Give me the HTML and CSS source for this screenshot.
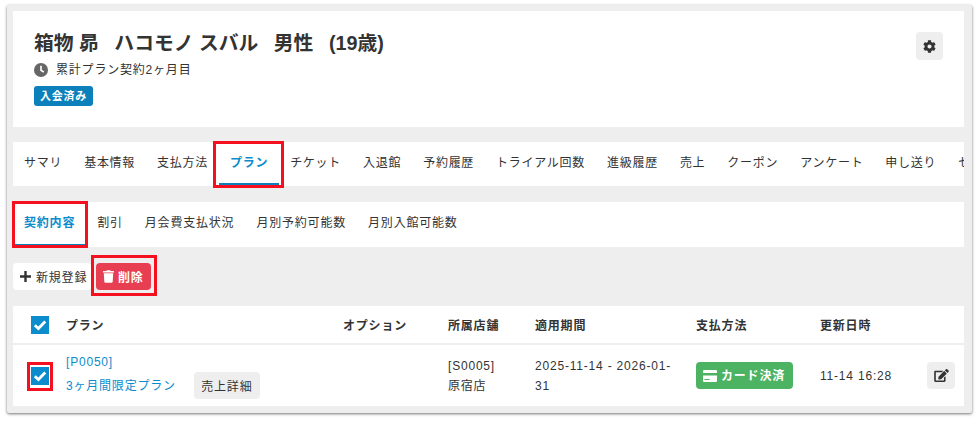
FILE: index.html
```html
<!DOCTYPE html>
<html lang="ja">
<head>
    <meta charset="UTF-8">
    <meta name="viewport" content="width=device-width, initial-scale=1.0">
    <title>プラン</title>
    <link rel="stylesheet" href="styles.css">
</head>
<body>
    <div class="frame">
        <section class="profile">
            <div class="profile-info">
                <h1 class="member-name"><span>箱物 昴</span><span>ハコモノ スバル</span><span>男性</span><span>(19歳)</span></h1>
                <p class="contract-months">
                    <svg class="clock-icon" viewBox="0 0 16 16"><circle cx="8" cy="8" r="8" fill="#666"/><path d="M8 3.2V8.300L11.200 10.400" fill="none" stroke="#fff" stroke-width="1.900"/></svg>
                    累計プラン契約2ヶ月目
                </p>
                <span class="status-badge">入会済み</span>
            </div>
            <button class="icon-btn settings-btn">
                <svg class="gear-icon" viewBox="0 0 512 512"><path fill="#333" d="M487.4 315.7l-42.6-24.6c4.3-23.2 4.3-47 0-70.2l42.6-24.6c4.9-2.8 7.1-8.6 5.5-14-11.1-35.6-30-67.8-54.7-94.6-3.8-4.1-10-5.1-14.8-2.3L380.8 110c-17.9-15.4-38.5-27.3-60.8-35.1V25.8c0-5.6-3.9-10.5-9.4-11.7-36.7-8.2-74.3-7.8-109.2 0-5.5 1.2-9.4 6.1-9.4 11.7V75c-22.2 7.9-42.8 19.8-60.8 35.1L88.7 85.5c-4.9-2.8-11-1.900-14.800 2.300-24.700 26.700-43.600 58.900-54.700 94.600-1.700 5.400.6 11.200 5.500 14L67.300 221c-4.300 23.200-4.300 47 0 70.200l-42.600 24.600c-4.900 2.800-7.100 8.600-5.500 14 11.100 35.600 30 67.800 54.700 94.600 3.800 4.100 10 5.100 14.800 2.300l42.600-24.600c17.900 15.400 38.500 27.300 60.800 35.100v49.200c0 5.600 3.900 10.500 9.400 11.700 36.700 8.200 74.300 7.800 109.200 0 5.500-1.200 9.400-6.100 9.400-11.700v-49.200c22.200-7.900 42.800-19.800 60.800-35.100l42.600 24.600c4.900 2.800 11 1.900 14.800-2.300 24.700-26.700 43.600-58.900 54.700-94.600 1.500-5.500-.7-11.300-5.600-14.100zM256 336c-44.100 0-80-35.900-80-80s35.900-80 80-80 80 35.900 80 80-35.900 80-80 80z"/></svg>
            </button>
        </section>

        <nav class="tabs main-tabs">
            <a class="tab">サマリ</a>
            <a class="tab">基本情報</a>
            <a class="tab">支払方法</a>
            <a class="tab active marked">プラン</a>
            <a class="tab">チケット</a>
            <a class="tab">入退館</a>
            <a class="tab">予約履歴</a>
            <a class="tab">トライアル回数</a>
            <a class="tab">進級履歴</a>
            <a class="tab">売上</a>
            <a class="tab">クーポン</a>
            <a class="tab">アンケート</a>
            <a class="tab">申し送り</a>
            <a class="tab tab-cut">セキュリティ</a>
        </nav>

        <nav class="tabs sub-tabs">
            <a class="tab active marked">契約内容</a>
            <a class="tab">割引</a>
            <a class="tab">月会費支払状況</a>
            <a class="tab">月別予約可能数</a>
            <a class="tab">月別入館可能数</a>
        </nav>

        <div class="actions">
            <button class="btn btn-new">
                <svg class="plus-icon" viewBox="0 0 11 11"><path fill="#333" d="M4.300 0h2.400v4.300H11v2.400H6.700V11H4.300V6.700H0V4.300h4.300z"/></svg>
                新規登録
            </button>
            <button class="btn btn-delete">
                <svg class="trash-icon" viewBox="0 0 448 512"><path fill="#fff" d="M432 32H312l-9.400-18.700A24 24 0 0 0 281.100 0H166.800a23.720 23.720 0 0 0-21.400 13.300L136 32H16A16 16 0 0 0 0 48v32a16 16 0 0 0 16 16h416a16 16 0 0 0 16-16V48a16 16 0 0 0-16-16zM53.200 467a48 48 0 0 0 47.900 45h245.800a48 48 0 0 0 47.900-45L416 128H32z"/></svg>
                削除
            </button>
        </div>

        <table class="plans">
            <thead>
                <tr>
                    <th class="col-check"><span class="checkbox"><svg viewBox="0 0 18 18"><path d="M3.800 9.300l3.600 3.300 6.800-7" fill="none" stroke="#fff" stroke-width="2.800"/></svg></span></th>
                    <th class="col-plan">プラン</th>
                    <th class="col-option">オプション</th>
                    <th class="col-shop">所属店舗</th>
                    <th class="col-period">適用期間</th>
                    <th class="col-pay">支払方法</th>
                    <th class="col-updated">更新日時</th>
                    <th class="col-edit"></th>
                </tr>
            </thead>
            <tbody>
                <tr>
                    <td class="col-check"><span class="checkbox marked-check"><svg viewBox="0 0 18 18"><path d="M3.800 9.300l3.600 3.300 6.800-7" fill="none" stroke="#fff" stroke-width="2.800"/></svg></span></td>
                    <td class="col-plan">
                        <a class="plan-code">[P0050]</a>
                        <div class="plan-line">
                            <a class="plan-name">3ヶ月間限定プラン</a>
                            <button class="btn btn-sales">売上詳細</button>
                        </div>
                    </td>
                    <td class="col-option"></td>
                    <td class="col-shop">[S0005]<br>原宿店</td>
                    <td class="col-period">2025-11-14 - 2026-01-31</td>
                    <td class="col-pay">
                        <span class="pay-badge">
                            <svg class="card-icon" viewBox="0 0 14 12"><path fill="#fff" d="M1 0h12a1 1 0 0 1 1 1v2H0V1a1 1 0 0 1 1-1zM0 5.500h14V11a1 1 0 0 1-1 1H1a1 1 0 0 1-1-1zm1.500 3.500v1h5V9z"/></svg>
                            カード決済
                        </span>
                    </td>
                    <td class="col-updated">11-14 16:28</td>
                    <td class="col-edit">
                        <button class="icon-btn edit-btn">
                            <svg class="edit-icon" viewBox="0 0 576 512"><path fill="#333" d="M402.600 83.200l90.200 90.200c3.800 3.800 3.800 10 0 13.800L274.400 405.600l-92.800 10.300c-12.400 1.400-22.900-9.100-21.500-21.500l10.300-92.800L388.800 83.200c3.800-3.800 10-3.800 13.800 0zm162-22.900l-48.800-48.800c-15.200-15.200-39.900-15.200-55.200 0l-35.400 35.400c-3.800 3.800-3.800 10 0 13.800l90.200 90.200c3.800 3.800 10 3.800 13.800 0l35.400-35.400c15.200-15.300 15.200-40 0-55.200zM384 346.200V448H64V128h229.800c3.200 0 6.200-1.300 8.500-3.500l40-40c7.600-7.600 2.200-20.500-8.500-20.500H48C21.500 64 0 85.500 0 112v352c0 26.500 21.500 48 48 48h352c26.500 0 48-21.500 48-48V306.200c0-10.700-12.900-16-20.500-8.500l-40 40c-2.200 2.300-3.500 5.300-3.500 8.500z"/></svg>
                        </button>
                    </td>
                </tr>
            </tbody>
        </table>
    </div>
</body>
</html>
```

FILE: styles.css
```css
* { box-sizing: border-box; }
html, body { height: 100%; }
body { margin: 0; background: #fff; color: #333; font-family: "Liberation Sans", "Noto Sans CJK JP", sans-serif; font-size: 12px; letter-spacing: 0.8px; overflow: hidden; }
button { font-family: inherit; letter-spacing: inherit; border: none; cursor: pointer; }
h1, p { margin: 0; }

.frame { width: 965px; height: 408px; margin: 5px 0 0 7px; padding: 6px 8px 6px 6px; background: #eee; border-radius: 2px; box-shadow: 0 1px 3px rgba(0, 0, 0, 0.55); }

.profile { display: flex; justify-content: space-between; height: 116px; padding: 21px 21px 0 21px; background: #fff; }
.member-name { display: flex; gap: 15.5px; font-size: 19.8px; line-height: 22px; font-weight: bold; letter-spacing: 0; color: #333; }
.contract-months { display: flex; align-items: center; gap: 8px; margin-top: 7px; line-height: 18px; }
.clock-icon { width: 14px; height: 14px; }
.status-badge { display: block; width: 59px; height: 20px; margin-top: 7px; line-height: 20px; text-align: center; background: #0b80bb; color: #fff; font-size: 11px; font-weight: bold; border-radius: 3px; }

.icon-btn { display: flex; align-items: center; justify-content: center; padding: 0; background: #eee; border-radius: 4px; }
.settings-btn { width: 27px; height: 28px; }
.gear-icon { width: 13px; height: 13px; }

.tabs { display: flex; background: #fff; }
.main-tabs { height: 44px; margin-top: 15px; letter-spacing: 0.72px; }
.sub-tabs { height: 45px; margin-top: 16px; }
.tab { position: relative; flex: none; display: block; padding: 0 11px; line-height: 42px; color: #333; white-space: nowrap; }
.tab-cut { flex: 1 1 0; min-width: 0; overflow: hidden; padding-right: 0; }
.tab.active { color: #0b8ccc; font-weight: bold; }
.tab.active::after { content: ""; position: absolute; left: 0; right: 0; bottom: 0; height: 3px; background: #0b80bb; }
.tab.marked::before { content: ""; position: absolute; border: 3px solid #f5101f; z-index: 1; }
.main-tabs .marked::before { top: -1px; bottom: -2px; left: -6px; right: -5px; }
.sub-tabs .marked::before { top: -1px; bottom: -1px; left: -1px; right: -2px; }

.actions { display: flex; align-items: flex-start; gap: 5px; height: 59px; padding-top: 16px; }
.btn { display: inline-flex; align-items: center; border-radius: 4px; color: #333; font-size: 12px; }
.btn-new { gap: 5px; width: 78px; height: 27px; padding: 0 0 0 7px; background: #fff; white-space: nowrap; }
.plus-icon { width: 11px; height: 11px; flex: none; }
.btn-delete { position: relative; gap: 4px; width: 55px; height: 27px; padding: 0 0 0 7px; background: #e83e51; color: #fff; font-weight: bold; }
.btn-delete::before { content: ""; position: absolute; top: -8px; bottom: -6px; left: -5px; right: -6px; border: 3px solid #f5101f; }
.trash-icon { width: 11px; height: 13px; flex: none; }

.plans { width: 951px; table-layout: fixed; border-collapse: collapse; background: #fff; }
.plans th { height: 38px; padding: 0; text-align: left; font-size: 12px; color: #333; font-weight: bold; border-bottom: 2px solid #eee; }
.plans td { height: 62px; padding: 0; line-height: 20px; color: #333; }
.plans .col-check { width: 53px; padding-left: 18px; }
.col-plan { width: 277px; }
.col-option { width: 105px; }
.col-shop { width: 87px; }
.plans .col-period { width: 161px; padding-right: 12px; }
.col-pay { width: 124px; }
.col-updated { width: 104px; }
.plans .col-edit { padding-left: 3px; }

.checkbox { position: relative; display: block; width: 18px; height: 18px; background: #0b8ccc; }
.checkbox svg { display: block; width: 18px; height: 18px; }
.marked-check::before { content: ""; position: absolute; top: -5px; bottom: -6px; left: -4px; right: -4px; border: 3px solid #f5101f; }

.plan-code, .plan-name { color: #0b8ccc; }
.plan-line { display: flex; align-items: center; gap: 18px; }
.btn-sales { justify-content: center; width: 66px; height: 27px; padding: 0; background: #eee; white-space: nowrap; }
.pay-badge { display: inline-flex; align-items: center; gap: 4px; width: 97px; height: 27px; padding-left: 7px; background: #4cb363; color: #fff; font-weight: bold; border-radius: 4px; vertical-align: middle; white-space: nowrap; }
.card-icon { width: 14px; height: 12px; flex: none; }
.edit-btn { width: 28px; height: 27px; }
.edit-icon { width: 15px; height: 13px; }
```
